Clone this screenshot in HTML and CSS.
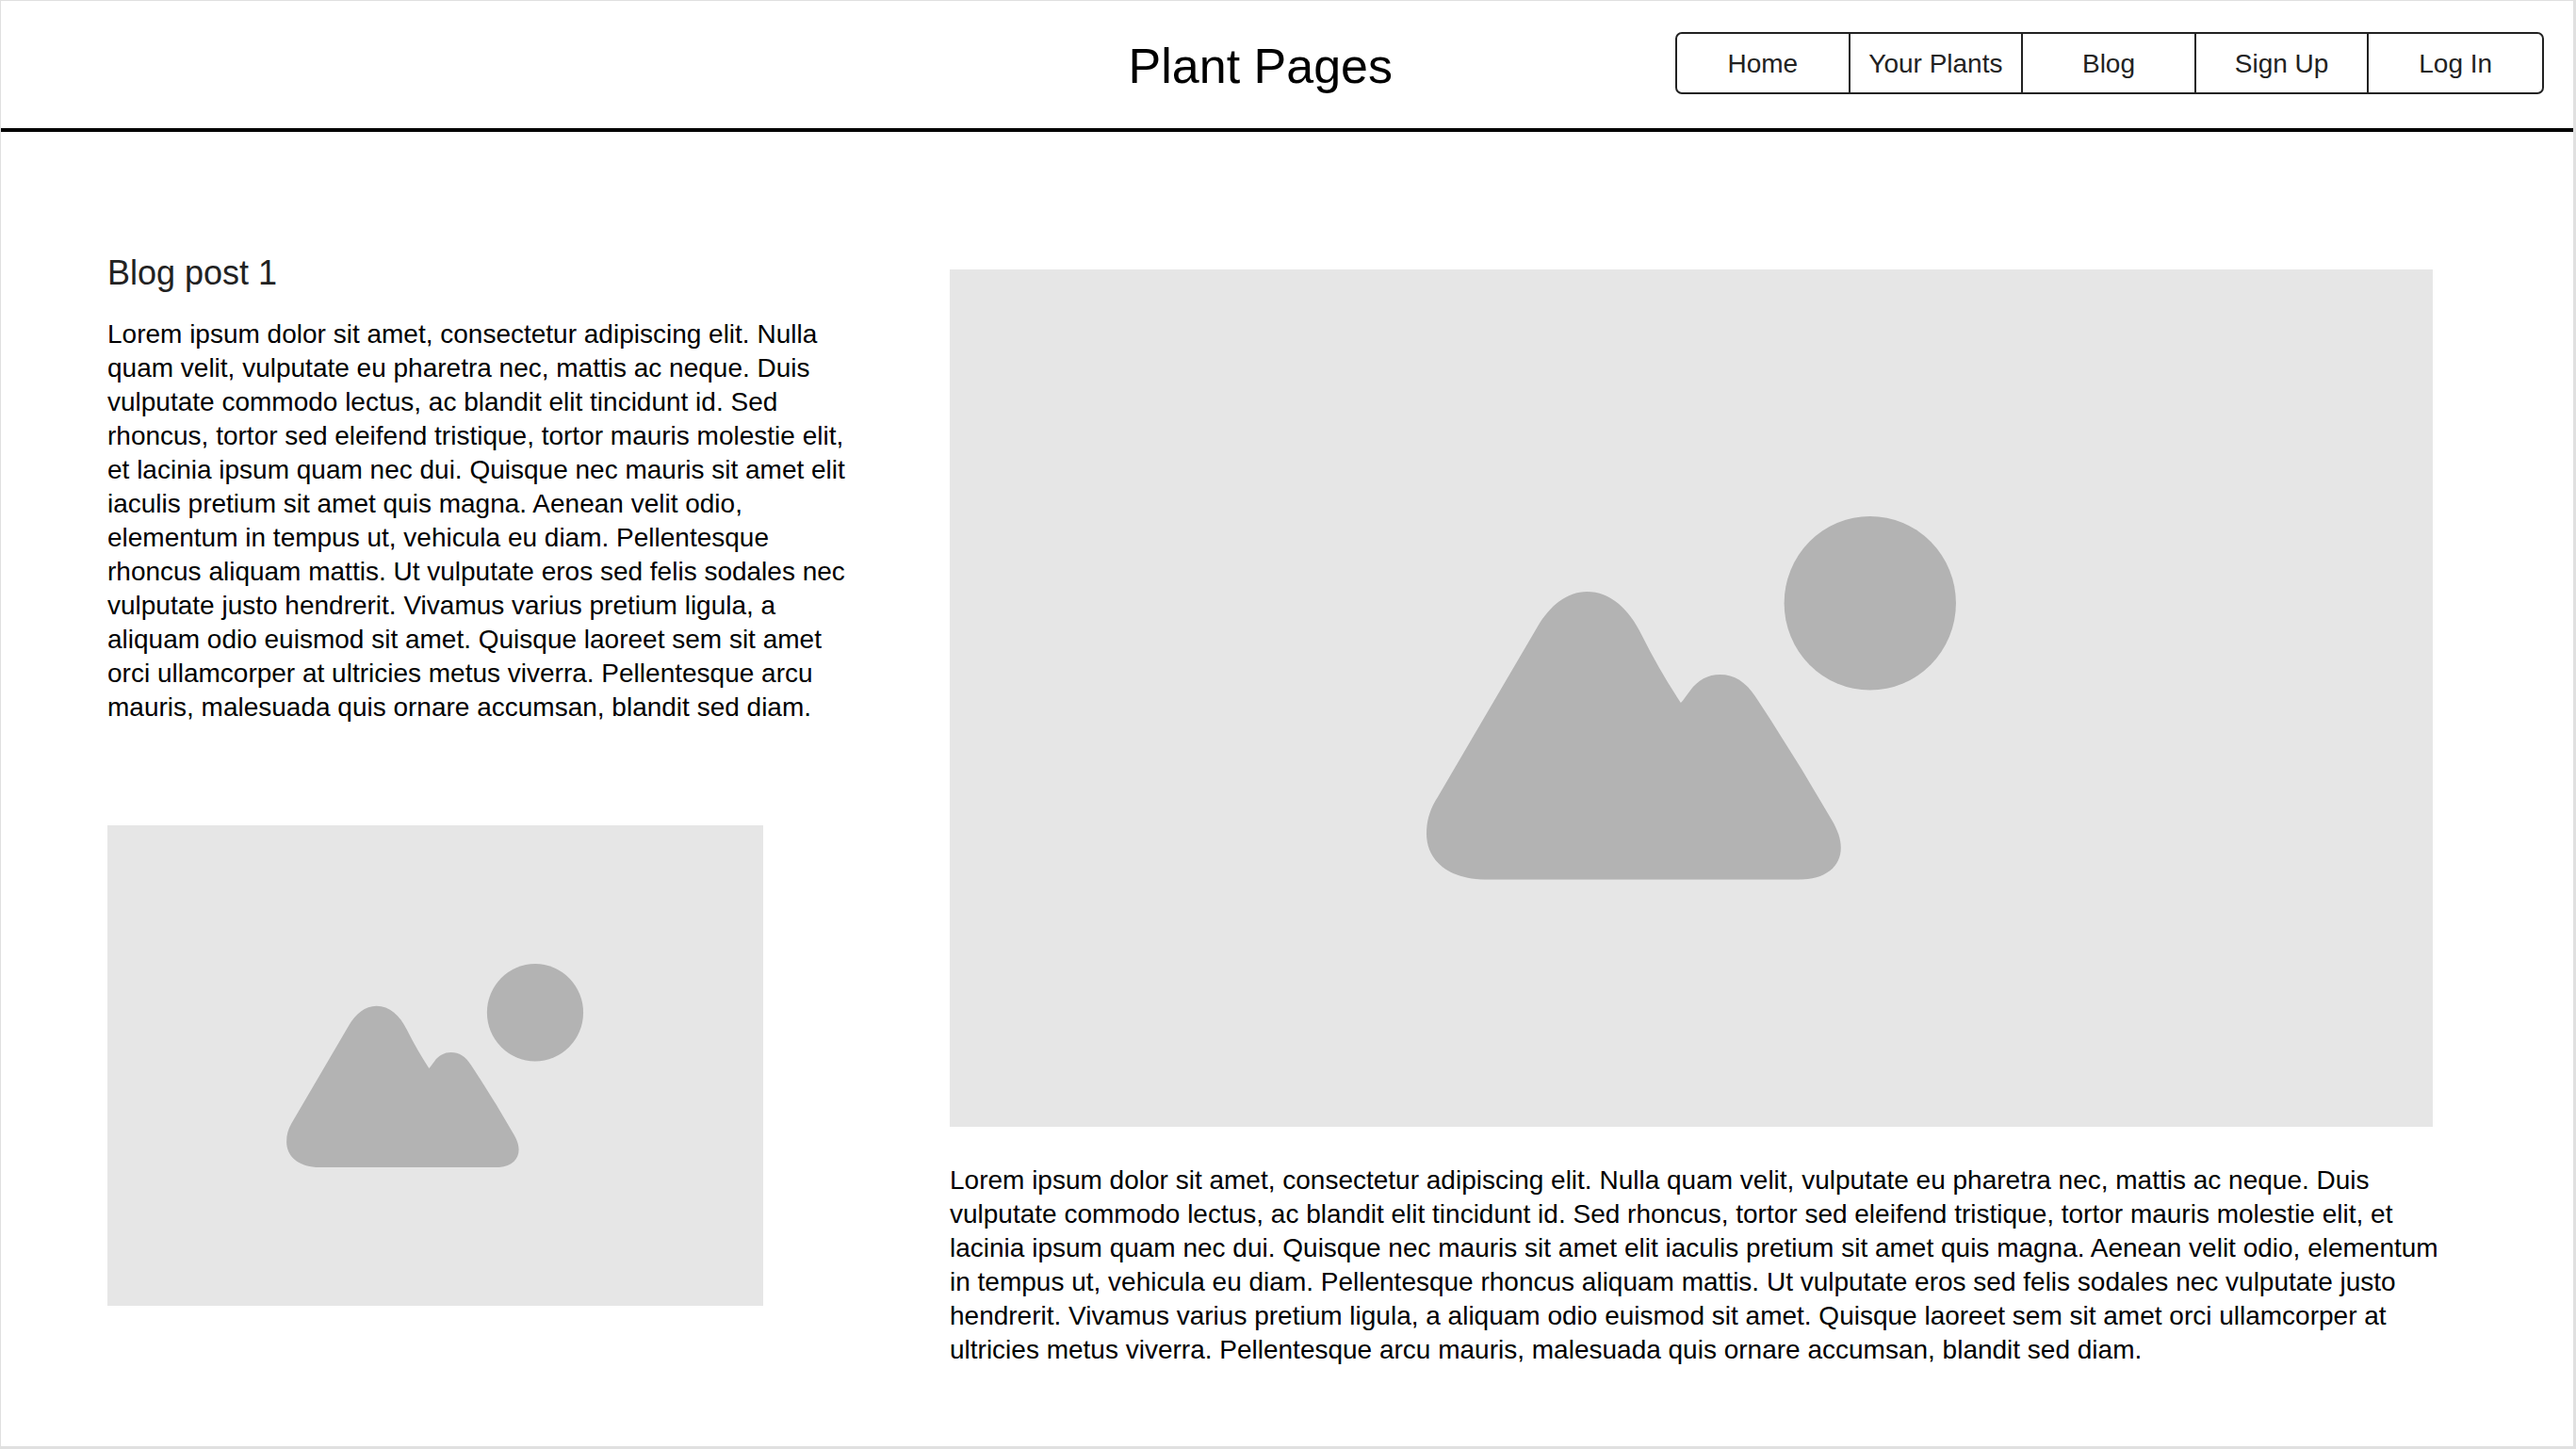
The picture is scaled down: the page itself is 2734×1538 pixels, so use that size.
FILE: index.html
```html
<!DOCTYPE html>
<html lang="en">
<head>
  <meta charset="utf-8">
  <meta name="viewport" content="width=device-width, initial-scale=1">
  <title>Plant Pages</title>
  <link rel="stylesheet" href="styles.css">
</head>
<body>
  <svg class="defs" aria-hidden="true">
    <symbol id="picture" viewBox="-2 0 566 386">
      <path d="M66 386C25 386 0 367 0 337C0 324 3 314 9 303L118 117C131 95 149 80 170.400 80C195 80 215 98 228.500 126Q248 165 270 198C273 195 276 190 280 185C288 174 299 168 311.600 168C327 168 339 176 349 191Q392 256 430 322C437 334 440 343 440 352C440 372 424 386 394.600 386Z"/>
      <ellipse cx="471" cy="92.300" rx="91.200" ry="92.300"/>
    </symbol>
  </svg>

  <header class="site-header">
    <h1 class="site-title">Plant Pages</h1>
    <nav class="site-nav">
      <a class="nav-link" href="#home">Home</a>
      <a class="nav-link" href="#plants">Your Plants</a>
      <a class="nav-link" href="#blog">Blog</a>
      <a class="nav-link" href="#signup">Sign Up</a>
      <a class="nav-link" href="#login">Log In</a>
    </nav>
  </header>

  <main class="post">
    <section class="post-intro">
      <h2 class="post-title">Blog post 1</h2>
      <p class="post-text">Lorem ipsum dolor sit amet, consectetur adipiscing elit. Nulla quam velit, vulputate eu pharetra nec, mattis ac neque. Duis vulputate commodo lectus, ac blandit elit tincidunt id. Sed rhoncus, tortor sed eleifend tristique, tortor mauris molestie elit, et lacinia ipsum quam nec dui. Quisque nec mauris sit amet elit iaculis pretium sit amet quis magna. Aenean velit odio, elementum in tempus ut, vehicula eu diam. Pellentesque rhoncus aliquam mattis. Ut vulputate eros sed felis sodales nec vulputate justo hendrerit. Vivamus varius pretium ligula, a aliquam odio euismod sit amet. Quisque laoreet sem sit amet orci ullamcorper at ultricies metus viverra. Pellentesque arcu mauris, malesuada quis ornare accumsan, blandit sed diam.</p>
      <div class="image image-small"><svg class="image-icon" role="img" aria-label="Image placeholder"><use href="#picture"/></svg></div>
    </section>
    <section class="post-feature">
      <div class="image image-large"><svg class="image-icon" role="img" aria-label="Image placeholder"><use href="#picture"/></svg></div>
      <p class="post-text">Lorem ipsum dolor sit amet, consectetur adipiscing elit. Nulla quam velit, vulputate eu pharetra nec, mattis ac neque. Duis vulputate commodo lectus, ac blandit elit tincidunt id. Sed rhoncus, tortor sed eleifend tristique, tortor mauris molestie elit, et lacinia ipsum quam nec dui. Quisque nec mauris sit amet elit iaculis pretium sit amet quis magna. Aenean velit odio, elementum in tempus ut, vehicula eu diam. Pellentesque rhoncus aliquam mattis. Ut vulputate eros sed felis sodales nec vulputate justo hendrerit. Vivamus varius pretium ligula, a aliquam odio euismod sit amet. Quisque laoreet sem sit amet orci ullamcorper at ultricies metus viverra. Pellentesque arcu mauris, malesuada quis ornare accumsan, blandit sed diam.</p>
    </section>
  </main>
</body>
</html>
```
FILE: styles.css
```css
* {
  box-sizing: border-box;
}

body {
  margin: 0;
  min-height: 100vh;
  border: solid #e0e0e0;
  border-width: 1px 3px 3px 1px;
  background: #fff;
  color: #000;
  font-family: "Liberation Sans", Arial, sans-serif;
  font-size: 28px;
  line-height: 36px;
}

h1,
h2,
p {
  margin: 0;
  font-weight: 400;
}

.defs {
  display: none;
}

.site-header {
  display: flex;
  justify-content: flex-end;
  align-items: flex-start;
  gap: 300px;
  margin: 0 -1px;
  padding: 33px 32px 36px;
  border-bottom: 4px solid #000;
}

.site-title {
  font-size: 52px;
  line-height: 66px;
  padding-top: 3px;
  margin-bottom: -3px;
  white-space: nowrap;
}

.site-nav {
  display: grid;
  grid-template-columns: repeat(5, 1fr);
  width: 922px;
  height: 66px;
  border: 2px solid #222;
  border-radius: 7px;
}

.nav-link {
  display: flex;
  align-items: center;
  justify-content: center;
  padding-top: 2px;
  color: #222;
  text-decoration: none;
}

.nav-link:not(:last-child) {
  border-right: 2px solid #222;
}

.post {
  display: grid;
  grid-template-columns: 800fr 1592fr;
  gap: 94px;
  padding: 128px 131px 80px 113px;
}

.post-title {
  margin-bottom: 25px;
  color: #222;
  font-size: 36px;
  line-height: 44px;
}

.post-feature {
  padding-top: 18px;
}

.image {
  display: flex;
  align-items: center;
  justify-content: center;
  background: #e6e6e6;
}

.image-small {
  width: 87%;
  aspect-ratio: 696 / 510;
  margin-top: 107px;
}

.image-large {
  width: calc(100% - 18px);
  aspect-ratio: 1574 / 910;
  margin-bottom: 39px;
}

.image-icon {
  height: 42.4%;
  aspect-ratio: 566 / 386;
  fill: #b3b3b3;
}
```
